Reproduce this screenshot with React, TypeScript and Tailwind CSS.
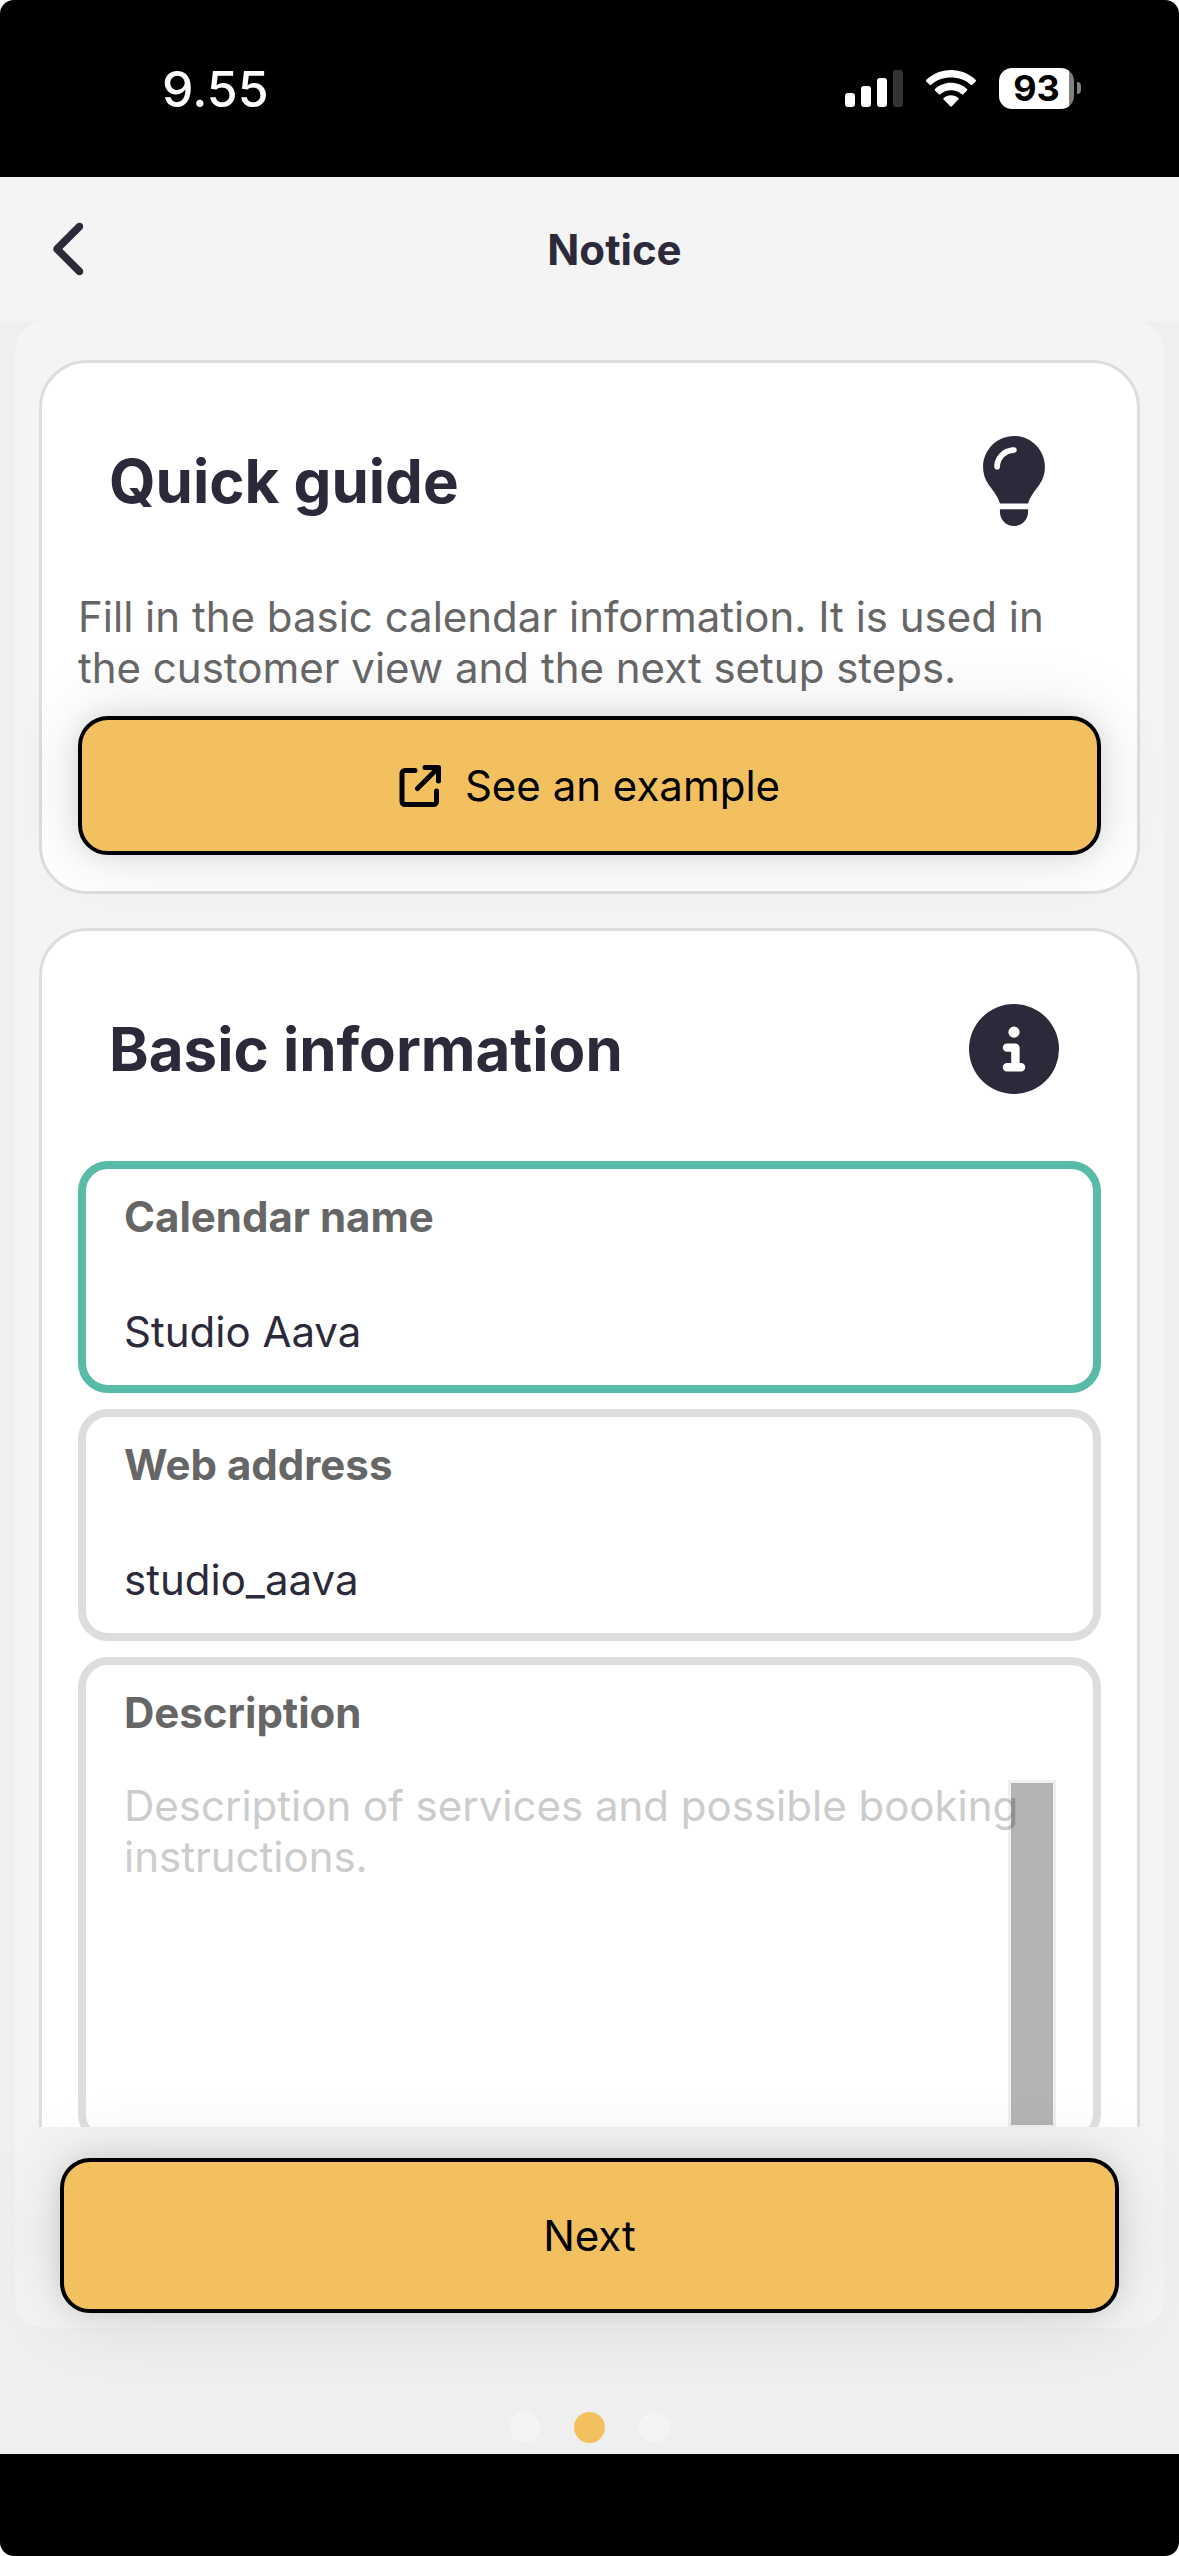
import { FaChevronLeft, FaCircleInfo, FaLightbulb } from "react-icons/fa6";
import type { ReactNode } from "react";

interface CardProps {
  title: string;
  icon: ReactNode;
  children: ReactNode;
}

interface TextFieldProps {
  id: string;
  label: string;
  value: string;
  active?: boolean;
}

function StatusBar() {
  return (
    <div className="h-[177px] shrink-0 bg-black text-white flex flex-row items-start justify-between pl-[162px] pr-[98px] pt-[60px]">
      <p className="text-[50px] leading-[58px] font-medium">9.55</p>
      <div className="h-[56px] flex flex-row items-center gap-[23px]">
        <svg viewBox="0 0 58 37" className="w-[58px] h-[37px]" fill="white">
          <rect x="0" y="23" width="10" height="14" rx="3" />
          <rect x="16" y="16" width="10" height="21" rx="3" />
          <rect x="32" y="8" width="10" height="29" rx="3" />
          <rect x="48" y="0" width="10" height="37" rx="3" opacity="0.2" />
        </svg>
        <svg viewBox="0 0 50 37" className="w-[50px] h-[37px]" fill="white">
          <path d="M25 0C34.500 0 43 3.600 49.600 9.800Q50.400 10.700 49.600 11.500L46.400 14.700Q45.500 15.500 44.700 14.700C39.300 9.800 32.500 7.400 25 7.400S10.700 9.800 5.300 14.700Q4.500 15.500 3.600 14.700L.4 11.500Q-.4 10.700.4 9.800C7 3.600 15.500 0 25 0Z" />
          <path d="M25 12.700C31.100 12.700 36.700 15 41 18.900Q41.800 19.800 41 20.600L37.300 24.200Q36.500 25 35.700 24.200C32.700 21.600 29.100 20.200 25 20.200S17.300 21.600 14.300 24.200Q13.500 25 12.700 24.200L9 20.600Q8.200 19.800 9 18.900C13.300 15 18.900 12.700 25 12.700Z" />
          <path d="M25 25.200C27.800 25.200 30.300 26.200 32.300 28Q33.100 28.800 32.300 29.600L25.800 36.300Q25 37.100 24.200 36.300L17.700 29.600Q16.900 28.800 17.700 28C19.700 26.200 22.200 25.200 25 25.200Z" />
        </svg>
        <div className="flex flex-row items-center gap-[3px]">
          <div className="w-[75px] h-[41px] rounded-[13px] bg-linear-to-r from-white from-93% to-[#808080] to-93% text-black flex items-center justify-center">
            <span className="text-[36px] leading-[41px] font-bold">93</span>
          </div>
          <div className="w-1 h-3 rounded-r-full bg-[#808080]" />
        </div>
      </div>
    </div>
  );
}

function Card(props: CardProps) {
  return (
    <section className="bg-white border-3 border-[#dddddd] rounded-[48px] px-9 py-9">
      <div className="flex flex-row items-center justify-between h-[164px] pl-[31px] pr-[42px] mb-7">
        <h2 className="text-[60px] leading-[72px] font-bold">{props.title}</h2>
        {props.icon}
      </div>
      {props.children}
    </section>
  );
}

function TextField(props: TextFieldProps) {
  return (
    <div
      className={
        "h-[232px] border-8 rounded-[30px] px-[38px] pt-[22px] flex flex-col " +
        (props.active ? "border-[#57bba8]" : "border-[#dddddd]")
      }
    >
      <label htmlFor={props.id} className="font-bold text-[#666666]">
        {props.label}
      </label>
      <input
        id={props.id}
        type="text"
        defaultValue={props.value}
        className="w-full h-[108px] mt-[35px] outline-none bg-transparent"
      />
    </div>
  );
}

function DescriptionField() {
  return (
    <div className="relative border-8 border-[#dddddd] rounded-[30px] px-[38px] pt-[22px] pb-2 flex flex-col">
      <label htmlFor="description" className="font-bold text-[#666666]">
        Description
      </label>
      <textarea
        id="description"
        placeholder={"Description of services and possible booking\ninstructions."}
        className="w-full h-[348px] mt-[42px] resize-none outline-none overflow-hidden bg-transparent placeholder:text-[#cccccc]"
      />
      {/* scrollbar floats over the text */}
      <div className="absolute top-[115px] right-[37px] w-12 h-[348px] p-[3px] bg-black/6">
        <div className="h-full bg-black/25" />
      </div>
    </div>
  );
}

function App() {
  return (
    <div className="bg-white">
      <div className="h-screen flex flex-col overflow-hidden rounded-[14px] bg-[#efefef] text-[#2c2a3a] text-[42px] leading-[51px] font-[Inter,sans-serif]">
        <StatusBar />
        <header className="h-[144px] shrink-0 bg-[#f4f4f4] grid grid-cols-[1fr_auto_1fr] items-center px-[42px]">
          <button type="button" aria-label="Back" className="justify-self-start">
            <FaChevronLeft size={60} />
          </button>
          <h1 className="font-bold pl-[50px]">Notice</h1>
        </header>

        <main className="flex-1 min-h-0 mx-[15px] rounded-[30px] bg-[#f4f4f4] flex flex-col">
          <div className="flex-1 min-h-0 overflow-hidden px-6 pt-[39px] flex flex-col gap-[34px]">
            <Card title="Quick guide" icon={<FaLightbulb size={90} />}>
              <p className="text-[#666666]">
                Fill in the basic calendar information. It is used in the customer view and the next setup steps.
              </p>
              <button
                type="button"
                className="w-full h-[139px] mt-[23px] border-4 border-black rounded-[30px] bg-[#f3c060] text-black flex items-center justify-center gap-6 shadow-[0_0_24px_rgba(0,0,0,0.1),0_0_75px_rgba(0,0,0,0.12)]"
              >
                <svg viewBox="0 0 42 42" className="size-[42px]" fill="none" stroke="currentColor" strokeWidth="5" strokeLinecap="round" strokeLinejoin="round">
                  <path d="M16 5.500H6a3 3 0 0 0-3 3V36.500a3 3 0 0 0 3 3H34.500a3 3 0 0 0 3-3V26" />
                  <path d="M26 2.500H39.500V16M39 3L18.500 23.500" />
                </svg>
                See an example
              </button>
            </Card>
            <Card title="Basic information" icon={<FaCircleInfo size={90} />}>
              <div className="flex flex-col gap-4 pt-[2px]">
                <TextField id="name" label="Calendar name" value="Studio Aava" active />
                <TextField id="address" label="Web address" value="studio_aava" />
                <DescriptionField />
              </div>
            </Card>
          </div>
          <div className="shrink-0 px-[45px] pt-[31px] pb-[15px]">
            <button
              type="button"
              className="w-full h-[155px] border-4 border-black rounded-[30px] bg-[#f3c060] text-black shadow-[0_0_24px_rgba(0,0,0,0.1),0_0_75px_rgba(0,0,0,0.12)]"
            >
              Next
            </button>
          </div>
        </main>

        <div className="h-[126px] shrink-0 flex flex-row justify-center items-end gap-[34px] pb-[11px]">
          <span className="size-[31px] rounded-full bg-[#f4f4f4]" />
          <span className="size-[31px] rounded-full bg-[#f3c060]" />
          <span className="size-[31px] rounded-full bg-[#f4f4f4]" />
        </div>
        <div className="h-[102px] shrink-0 bg-black" />
      </div>
    </div>
  );
}

export default App;
